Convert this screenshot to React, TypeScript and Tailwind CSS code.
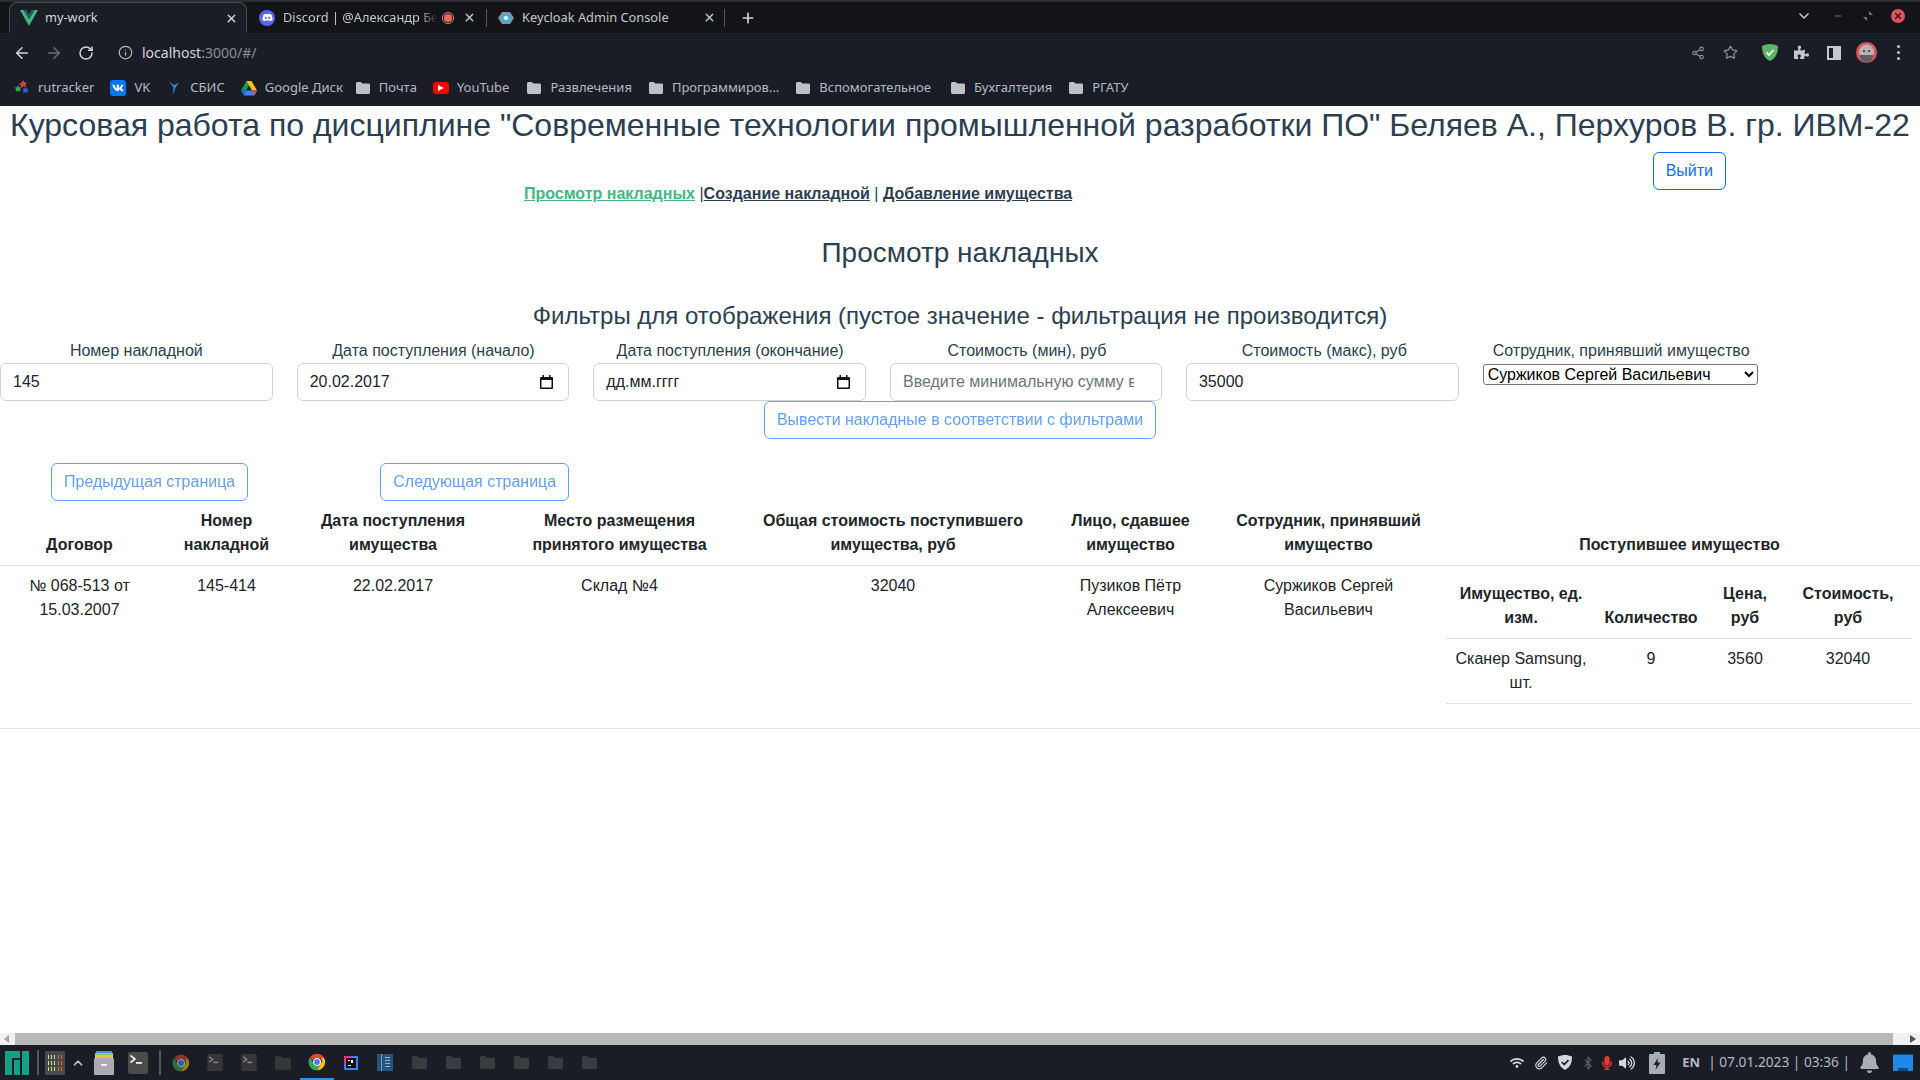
import React from 'react'
import { ArrowLeft, ArrowRight, RotateCw, Info, Share2, Star, X, Plus, ChevronDown, ChevronUp, Minus, Paperclip, Bluetooth } from 'lucide-react'
import { FaDiscord, FaVk, FaPuzzlePiece, FaBell, FaMicrophone, FaVolumeUp, FaWifi } from 'react-icons/fa'

const Folder = ({ color = '#bcc2cb', size = 14 }: { color?: string; size?: number }) => (
  <svg width={size} height={size} viewBox="0 0 14 14" className="shrink-0">
    <path d="M0 2.5C0 1.7.6 1 1.4 1h3.4l1.6 1.6h6.2c.8 0 1.4.6 1.4 1.4v7.6c0 .8-.6 1.4-1.4 1.4H1.4C.6 13 0 12.400 0 11.600z" fill={color} />
  </svg>
)

const ChromeLogo = ({ dim = false }: { dim?: boolean }) => (
  <svg width="18" height="18" viewBox="0 0 24 24" className={dim ? 'opacity-60' : ''}>
    <path d="M12 1a11 11 0 0 1 9.5 5.500H12a5.500 5.500 0 0 0-5.200 3.700L3.200 5A11 11 0 0 1 12 1z" fill="#e94235" />
    <path d="M21.500 6.500A11 11 0 0 1 12 23l4.700-8.200a5.500 5.500 0 0 0 0-8.300z" fill="#fabb05" />
    <path d="M3.200 5 7.300 14.800A5.500 5.500 0 0 0 16.700 14.800L12 23A11 11 0 0 1 3.200 5z" fill="#34a853" />
    <circle cx="12" cy="12" r="4.600" fill="#3b82f6" stroke="#fff" strokeWidth="1.500" />
  </svg>
)

const TerminalIcon = ({ dim = false }: { dim?: boolean }) => (
  <svg width={dim ? 16 : 20} height={dim ? 17 : 22} viewBox="0 0 20 22">
    <rect width="20" height="22" rx="2" fill={dim ? '#35373b' : '#4a4b4d'} />
    <path d="M2.500 3.500 7 7l-4.500 3.500" fill="none" stroke={dim ? '#8b8d91' : '#eee'} strokeWidth="1.600" />
    <rect x="8" y="10" width="6" height="1.800" fill={dim ? '#8b8d91' : '#eee'} />
  </svg>
)

const bookmarks: { name: string; icon: React.ReactNode; cls?: string }[] = [
  {
    name: 'rutracker',
    icon: (
      <svg width="16" height="16" viewBox="0 0 16 16">
        <path d="M9 0l1.200 2.200L13 2.500l-1.500 2 .8 2.500-2.800-.8L7 8l-.3-2.800L4.500 3.800 7 3z" fill="#d2404a" />
        <path d="M4 5l1 2.300 2.600.2-1.800 1.800.6 2.700L4 10.700 1.600 12l.6-2.700L.2 7.500l2.700-.2z" fill="#27b45a" />
        <path d="M11.500 6.500l1 2.200 2.500.3-1.800 1.700.5 2.600-2.200-1.300-2.300 1.300.5-2.600L8 9l2.500-.3z" fill="#3f58d8" />
      </svg>
    ),
  },
  {
    name: 'VK',
    icon: (
      <span className="flex h-4 w-4 items-center justify-center rounded-[3px] bg-[#0077ff]">
        <FaVk size={12} color="#fff" />
      </span>
    ),
  },
  {
    name: 'СБИС',
    icon: (
      <svg width="16" height="16" viewBox="0 0 16 16">
        <path d="M3 1c1.500 2 3 3 5.500 4L13 2.500 9.500 7.500 7 15l.5-8C6 5.500 4 3.500 3 1z" fill="#2a8fe8" />
      </svg>
    ),
  },
  {
    name: 'Google Диск',
    cls: 'mr-[-4px]',
    icon: (
      <svg width="16" height="15" viewBox="0 0 16 15">
        <path d="M5.500 0h5L5 9.500H0z" fill="#0f9d58" />
        <path d="M10.500 0 16 9.500h-5L5.500 0z" fill="#ffc107" />
        <path d="M3 14.500 5 9.500h11l-2.500 5z" fill="#4285f4" />
        <path d="M0 9.500h5l-2 5z" fill="#1a73e8" />
        <path d="M11 9.500h5l-2.500 5z" fill="#ea4335" />
      </svg>
    ),
  },
  { name: 'Почта', icon: <Folder /> },
  {
    name: 'YouTube',
    cls: 'mr-[1px]',
    icon: (
      <span className="flex h-[12px] w-4 items-center justify-center rounded-[3px] bg-[#f00]">
        <svg width="6" height="6" viewBox="0 0 6 6"><path d="M0 0l6 3-6 3z" fill="#fff" /></svg>
      </span>
    ),
  },
  { name: 'Развлечения', icon: <Folder /> },
  { name: 'Программиров...', icon: <Folder /> },
  { name: 'Вспомогательное', cls: 'mr-[3px]', icon: <Folder /> },
  { name: 'Бухгалтерия', icon: <Folder /> },
  { name: 'РГАТУ', icon: <Folder /> },
]

const BrowserChrome = () => (
  <div className="shrink-0 font-['Noto_Sans',sans-serif] text-[13px] text-[#c3c8d0]">
    {/* Tabs */}
    <div className="flex h-[33px] items-end border-t-2 border-[#2b2d31] bg-[#131417] text-[12.8px]">
      <div className="ml-[9px] flex h-[31px] w-[238px] items-center rounded-t-lg border border-b-0 border-[#4a4b4f] bg-[#1a1d26] pl-[10px] pr-[8px]">
        <svg width="18" height="16" viewBox="0 0 18 16" className="shrink-0">
          <path d="M0 0h3.600L9 9.300 14.400 0H18L9 16z" fill="#3fb984" />
          <path d="M3.600 0h3L9 4.200 11.400 0h3L9 9.300z" fill="#2b5c5c" />
        </svg>
        <span className="ml-[7px] text-[#d4d7dc]">my-work</span>
        <X size={13} strokeWidth={2.500} className="ml-auto text-[#d4d7dc]" />
      </div>
      <div className="flex h-[31px] w-[240px] items-center pl-[12px]">
        <span className="flex h-4 w-4 shrink-0 items-center justify-center rounded-full bg-[#5865f2]">
          <FaDiscord size={11} color="#fff" />
        </span>
        <span className="ml-[8px] w-[155px] whitespace-nowrap [mask-image:linear-gradient(to_right,black_88%,transparent)]">Discord | @Александр Бе</span>
        <span className="ml-[4px] flex h-[12px] w-[12px] shrink-0 items-center justify-center rounded-full border border-[#e8867e]">
          <span className="h-[8px] w-[8px] rounded-full bg-[#e8695f]" />
        </span>
        <X size={13} strokeWidth={2.500} className="ml-auto" />
        <span className="ml-[10px] h-[18px] w-px shrink-0 bg-[#55575c]" />
      </div>
      <div className="flex h-[31px] w-[238px] items-center pl-[11px]">
        <svg width="16" height="14" viewBox="0 0 16 14" className="shrink-0">
          <path d="M4 1h8l4 6-4 6H4L0 7z" fill="#8a9098" />
          <path d="M2.500 7 6 3h4l3.500 4L10 11H6z" fill="#2fb4ee" />
          <path d="M5.500 7 7 5h2l1.500 2L9 9H7z" fill="#e8f6fc" />
        </svg>
        <span className="ml-[8px]">Keycloak Admin Console</span>
        <X size={13} strokeWidth={2.500} className="ml-auto" />
        <span className="ml-[8px] h-[18px] w-px shrink-0 bg-[#55575c]" />
      </div>
      <Plus size={16} strokeWidth={2.500} className="mb-[7px] ml-[15px] text-[#d4d7dc]" />
      <div className="mb-[9px] ml-auto flex items-center">
        <ChevronDown size={16} strokeWidth={2.500} className="text-[#c0c4ca]" />
        <Minus size={10} strokeWidth={2.500} className="ml-[21px] text-[#6f7278]" />
        <svg width="10" height="10" viewBox="0 0 10 10" className="ml-[20px]"><path d="M6 0v4h4zM4 10V6H0z" fill="#6f7278" /></svg>
        <span className="ml-[18px] mr-[15px] flex h-[14px] w-[14px] items-center justify-center rounded-full bg-[#e2535c]">
          <X size={10} strokeWidth={3} className="text-[#1a1d26]" />
        </span>
      </div>
    </div>
    {/* Toolbar */}
    <div className="flex h-[37px] items-center bg-[#1a1d26] pt-[2px]">
      <ArrowLeft size={18} strokeWidth={2} className="ml-[13px] text-[#d4d7dc]" />
      <ArrowRight size={18} strokeWidth={2} className="ml-[14px] text-[#6b6e74]" />
      <RotateCw size={16} strokeWidth={2.200} className="ml-[15px] text-[#d4d7dc]" />
      <Info size={15} className="ml-[24px] text-[#b4b8be]" />
      <span className="ml-[9px] text-[14px] text-[#d4d7dc]">localhost<span className="text-[#8b8f96]">:3000/#/</span></span>
      <div className="ml-auto flex items-center">
        <Share2 size={14} className="text-[#8b8f96]" />
        <Star size={15} className="ml-[18px] text-[#8b8f96]" />
        <svg width="16" height="17" viewBox="0 0 16 17" className="ml-[24px]">
          <path d="M8 0c3 0 5.500.7 8 2 0 7-2 12-8 15C2 14 0 9 0 2c2.500-1.300 5-2 8-2z" fill="#5bb467" />
          <path d="M4.500 8.500 7 11l4.500-5" fill="none" stroke="#fff" strokeWidth="1.800" />
        </svg>
        <FaPuzzlePiece size={15} className="ml-[16px] text-[#c3c8d0]" />
        <span className="ml-[18px] flex h-[14px] w-[14px] border-[2px] border-[#c3c8d0]">
          <span className="ml-auto h-full w-[6px] bg-[#c3c8d0]" />
        </span>
        <svg width="21" height="21" viewBox="0 0 21 21" className="ml-[15px]">
          <circle cx="10.500" cy="10.500" r="10.500" fill="#d9545e" />
          <circle cx="10.500" cy="10" r="7.500" fill="#b9b4b4" />
          <rect x="7" y="8" width="2" height="2" fill="#4a4a52" />
          <rect x="12" y="8" width="2" height="2" fill="#4a4a52" />
          <path d="M3.500 13h14l-1.500 5-5.500 3-5.500-3z" fill="#5e5d68" />
        </svg>
        <span className="ml-[20px] mr-[20px] flex flex-col gap-[3px]">
          <span className="h-[3px] w-[3px] rounded-full bg-[#c3c8d0]" />
          <span className="h-[3px] w-[3px] rounded-full bg-[#c3c8d0]" />
          <span className="h-[3px] w-[3px] rounded-full bg-[#c3c8d0]" />
        </span>
      </div>
    </div>
    {/* Bookmarks */}
    <div className="flex h-[36px] items-center gap-4 bg-[#1a1d26] pl-[14px] text-[#b4bac4]">
      {bookmarks.map((b) => (
        <div key={b.name} className={'flex items-center ' + (b.cls ?? '')}>
          <span className="flex w-4 shrink-0 justify-center">{b.icon}</span>
          <span className="ml-[8px] whitespace-nowrap">{b.name}</span>
        </div>
      ))}
    </div>
  </div>
)

const fieldLabel = 'text-center leading-6 whitespace-nowrap'
const textInput = 'block h-[38px] w-full rounded-md border border-[#ced4da] bg-white px-3 text-[#212529] outline-none placeholder:text-[#6c757d]'

const DateField = ({ value }: { value: string }) => (
  <div className="flex h-[38px] w-full items-center rounded-md border border-[#ced4da] bg-white pl-3 pr-[15px] text-[#212529]">
    <span>{value}</span>
    <svg width="13" height="14" viewBox="0 0 13 14" className="ml-auto">
      <path d="M2.500 0h1.500v2h5V0h1.500v2H12a1 1 0 0 1 1 1v10a1 1 0 0 1-1 1H1a1 1 0 0 1-1-1V3a1 1 0 0 1 1-1h1.500zM1.500 5V12.500h10V5z" fill="#111" />
    </svg>
  </div>
)

const OutlineButton = ({ children, faded = false }: { children: React.ReactNode; faded?: boolean }) => (
  <button className={'h-[38px] whitespace-nowrap rounded-md border border-[#0d6efd] bg-white px-3 text-[#0d6efd] ' + (faded ? 'opacity-65' : '')}>
    {children}
  </button>
)

const Filters = () => (
  <div className="flex gap-6">
    <div className="w-[272.67px] shrink-0">
      <div className={fieldLabel}>Номер накладной</div>
      <input className={textInput} defaultValue="145" />
    </div>
    <div className="w-[272.67px] shrink-0">
      <div className={fieldLabel + ' pl-[1px]'}>Дата поступления (начало)</div>
      <DateField value="20.02.2017" />
    </div>
    <div className="w-[272.67px] shrink-0">
      <div className={fieldLabel + ' pl-[1px]'}>Дата поступления (окончание)</div>
      <DateField value="дд.мм.гггг" />
    </div>
    <div className="w-[272px] shrink-0">
      <div className={fieldLabel + ' pl-[2px]'}>Стоимость (мин), руб</div>
      <input className={textInput + ' pr-[27px]'} placeholder="Введите минимальную сумму в рублях" />
    </div>
    <div className="w-[272.67px] shrink-0">
      <div className={fieldLabel + ' pl-[4px]'}>Стоимость (макс), руб</div>
      <input className={textInput} defaultValue="35000" />
    </div>
    <div className="w-[275px] shrink-0">
      <div className={fieldLabel + ' pl-[2px]'}>Сотрудник, принявший имущество</div>
      <select className="mt-[1px] block h-[21px] w-full rounded-[3px] border border-[#767676] bg-white text-black" defaultValue="s">
        <option value="s">Суржиков Сергей Васильевич</option>
      </select>
    </div>
  </div>
)

const ItemsTable = () => (
  <table className="mb-4 w-[466px] table-fixed border-collapse text-center text-[#212529]">
    <colgroup>
      <col className="w-[150px]" />
      <col className="w-[110px]" />
      <col className="w-[78px]" />
      <col className="w-[128px]" />
    </colgroup>
    <thead>
      <tr className="border-b border-[#dee2e6] align-bottom">
        <th className="p-2 font-bold">Имущество, ед. изм.</th>
        <th className="p-2 font-bold">Количество</th>
        <th className="p-2 font-bold">Цена, руб</th>
        <th className="p-2 font-bold">Стоимость, руб</th>
      </tr>
    </thead>
    <tbody>
      <tr className="border-b border-[#dee2e6] align-top">
        <td className="p-2">Сканер Samsung, шт.</td>
        <td className="p-2">9</td>
        <td className="p-2">3560</td>
        <td className="p-2">32040</td>
      </tr>
    </tbody>
  </table>
)

const InvoicesTable = () => (
  <table className="w-[1924px] table-fixed border-collapse text-center text-[#212529]">
    <colgroup>
      <col className="w-[159px]" />
      <col className="w-[135px]" />
      <col className="w-[198px]" />
      <col className="w-[255px]" />
      <col className="w-[292px]" />
      <col className="w-[183px]" />
      <col className="w-[213px]" />
      <col className="w-[489px]" />
    </colgroup>
    <thead>
      <tr className="border-b border-[#dee2e6] align-bottom">
        <th className="p-2 font-bold">Договор</th>
        <th className="p-2 font-bold">Номер накладной</th>
        <th className="p-2 font-bold">Дата поступления имущества</th>
        <th className="px-8 py-2 font-bold">Место размещения принятого имущества</th>
        <th className="p-2 font-bold">Общая стоимость поступившего имущества, руб</th>
        <th className="p-2 font-bold">Лицо, сдавшее имущество</th>
        <th className="p-2 font-bold">Сотрудник, принявший имущество</th>
        <th className="p-2 font-bold">Поступившее имущество</th>
      </tr>
    </thead>
    <tbody>
      <tr className="border-b border-[#dee2e6] align-top">
        <td className="p-2">№ 068-513 от 15.03.2007</td>
        <td className="p-2">145-414</td>
        <td className="p-2">22.02.2017</td>
        <td className="p-2">Склад №4</td>
        <td className="p-2">32040</td>
        <td className="p-2">Пузиков Пётр Алексеевич</td>
        <td className="p-2">Суржиков Сергей Васильевич</td>
        <td className="py-2 pl-[11px] pr-2"><ItemsTable /></td>
      </tr>
    </tbody>
  </table>
)

const Page = () => (
  <div className="min-h-0 flex-1 overflow-hidden bg-white font-['Liberation_Sans',Arial,sans-serif] text-base leading-6 text-[#2c3e50]">
    <h1 className="mb-2 whitespace-nowrap pl-[10px] text-[32px] leading-[38.4px]">
      Курсовая работа по дисциплине "Современные технологии промышленной разработки ПО" Беляев А., Перхуров В. гр. ИВМ-22
    </h1>
    <div className="flex h-[54px] items-start">
      <div className="ml-[524px] mt-[30px] whitespace-nowrap">
        <a className="font-bold text-[#42b983] underline">Просмотр накладных</a>
        <span> |</span>
        <a className="font-bold underline">Создание накладной</a>
        <span> | </span>
        <a className="font-bold underline">Добавление имущества</a>
      </div>
      <div className="ml-auto mr-[194px]"><OutlineButton>Выйти</OutlineButton></div>
    </div>
    <h3 className="mt-[30px] text-center text-[28px] leading-[33.6px]">Просмотр накладных</h3>
    <h4 className="mb-2 mt-8 text-center text-2xl leading-[28.8px]">Фильтры для отображения (пустое значение - фильтрация не производится)</h4>
    <Filters />
    <div className="flex justify-center">
      <OutlineButton faded>Вывести накладные в соответствии с фильтрами</OutlineButton>
    </div>
    <div className="mt-6 flex">
      <div className="ml-[51px]"><OutlineButton faded>Предыдущая страница</OutlineButton></div>
      <div className="ml-[132px]"><OutlineButton faded>Следующая страница</OutlineButton></div>
    </div>
    <InvoicesTable />
  </div>
)

const ScrollBar = () => (
  <div className="flex h-[13px] shrink-0 items-center border-t border-white bg-[#f1f1f1]">
    <svg width="6" height="8" viewBox="0 0 6 8" className="ml-[4px]"><path d="M5 0v8L0 4z" fill="#a3a3a3" /></svg>
    <div className="ml-[5px] h-full w-[1878px] bg-[#b9b9b9]" />
    <svg width="6" height="8" viewBox="0 0 6 8" className="ml-[17px]"><path d="M0 0v8l6-4z" fill="#505050" /></svg>
  </div>
)

const DockSlot = ({ children, active = false }: { children: React.ReactNode; active?: boolean }) => (
  <div className={'flex h-full w-[34px] shrink-0 items-center justify-center ' + (active ? 'border-b-2 border-[#2f8fdc]' : '')}>
    {children}
  </div>
)

const Taskbar = () => (
  <div className="flex h-[35px] shrink-0 items-center bg-[#1a1d26] font-['Noto_Sans',sans-serif] text-[14px] text-[#b4bac4]">
    <svg width="24" height="24" viewBox="0 0 24 24" className="ml-[5px] shrink-0">
      <path d="M0 0h15v7H7v17H0zM9 9h6v15H9zM17 0h7v24h-7z" fill="#16a085" />
    </svg>
    <span className="ml-[8px] h-[25px] w-[2px] bg-[#55575c]" />
    <svg width="20" height="24" viewBox="0 0 20 24" className="ml-[6px] shrink-0">
      <rect width="20" height="24" rx="1" fill="#48494c" />
      <path d="M3 4h1v4H3zM6 4h1v4H6zM9 4h1v4H9zM3 10h1v4H3zM6 10h1v4H6zM9 10h1v4H9zM3 16h1v4H3zM6 16h1v4H6zM9 16h1v4H9z" fill="#d5e08a" />
      <path d="M13 4h1v4h-1zM16 4h1v4h-1zM13 10h1v4h-1zM16 10h1v4h-1zM13 16h1v4h-1zM16 16h1v4h-1z" fill="#e8642c" />
    </svg>
    <ChevronUp size={14} strokeWidth={3} className="ml-[6px] text-[#c3c8d0]" />
    <svg width="20" height="24" viewBox="0 0 20 24" className="ml-[9px] shrink-0">
      <rect x="2" width="16" height="3" fill="#4a90d9" />
      <rect x="1" y="2" width="18" height="3" fill="#8ccf6a" />
      <rect x="1" y="4" width="18" height="3" fill="#e8c04a" />
      <rect y="7" width="20" height="17" rx="1" fill="#a9abb0" />
      <rect x="7" y="13" width="6" height="2" fill="#eee" />
    </svg>
    <span className="ml-[14px] flex"><TerminalIcon /></span>
    <span className="ml-[11px] h-[25px] w-[2px] bg-[#55575c]" />
    <div className="ml-[3px] flex h-full items-center">
      <DockSlot><ChromeLogo dim /></DockSlot>
      <DockSlot><TerminalIcon dim /></DockSlot>
      <DockSlot><TerminalIcon dim /></DockSlot>
      <DockSlot><Folder color="#35373b" size={16} /></DockSlot>
      <DockSlot active><ChromeLogo /></DockSlot>
      <DockSlot>
        <svg width="14" height="14" viewBox="0 0 14 14">
          <rect width="14" height="14" fill="#3b82f6" />
          <path d="M0 0h9L6 2H2v5L0 9z" fill="#e0358c" />
          <rect x="2" y="2" width="10" height="10" fill="#111" />
          <path d="M4 4h2v1H4zM7 4h2v3H7zM4 9h3v1H4z" fill="#fff" />
        </svg>
      </DockSlot>
      <DockSlot>
        <svg width="16" height="17" viewBox="0 0 16 17">
          <rect width="16" height="17" fill="#26527c" />
          <rect x="4" width="1" height="17" fill="#6aa0d0" />
          <path d="M8 3h5v1H8zM8 6h5v1H8zM8 9h5v1H8zM8 12h5v1H8z" fill="#8db8dc" />
        </svg>
      </DockSlot>
      {[0, 1, 2, 3, 4, 5].map((i) => (
        <DockSlot key={i}><Folder color="#3a3b3e" size={15} /></DockSlot>
      ))}
    </div>
    <div className="ml-auto flex items-center">
      <FaWifi size={14} className="text-[#d4d7dc]" />
      <Paperclip size={14} className="ml-[10px] text-[#d4d7dc]" />
      <svg width="14" height="15" viewBox="0 0 14 15" className="ml-[10px]">
        <path d="M7 0c2.500 0 4.500.6 7 1.600C14 8 12 12.500 7 15 2 12.500 0 8 0 1.600 2.500.6 4.500 0 7 0z" fill="#d4d7dc" />
        <path d="M3.800 7 6.200 9.500 10.500 5" fill="none" stroke="#1a1d26" strokeWidth="1.800" />
      </svg>
      <Bluetooth size={14} strokeWidth={2.500} className="ml-[9px] text-[#55575c]" />
      <FaMicrophone size={14} className="ml-[5px] text-[#e8392f]" />
      <FaVolumeUp size={16} className="ml-[5px] text-[#d4d7dc]" />
      <svg width="16" height="22" viewBox="0 0 16 22" className="ml-[14px]">
        <path d="M5 0h6v2h4a1 1 0 0 1 1 1v18a1 1 0 0 1-1 1H1a1 1 0 0 1-1-1V3a1 1 0 0 1 1-1h4z" fill="#a9adb4" />
        <path d="M9 6 4.500 13H7.500L6.500 18 11.500 10.500H8.500z" fill="#1a1d26" />
      </svg>
      <span className="ml-[17px] font-bold text-[13px]">EN</span>
      <span className="ml-[8px] whitespace-nowrap text-[13.7px]">| 07.01.2023 | 03:36 |</span>
      <FaBell size={21} className="ml-[9px] text-[#a9adb4]" />
      <span className="ml-[13px] mr-[7px] flex h-[17px] w-[20px] items-end justify-center border-t border-[#114a80] bg-[#1f88e5]">
        <span className="h-[3px] w-[10px] bg-[#114a80]" />
      </span>
    </div>
  </div>
)

export default function App() {
  return (
    <div className="flex h-screen flex-col overflow-hidden bg-white">
      <BrowserChrome />
      <Page />
      <ScrollBar />
      <Taskbar />
    </div>
  )
}
